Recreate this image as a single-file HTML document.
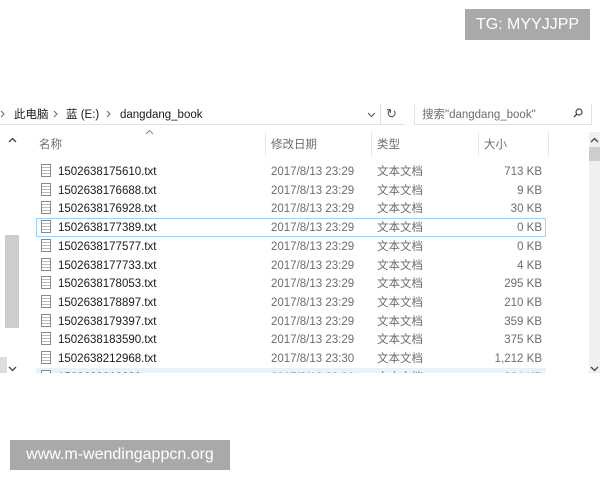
<!DOCTYPE html><html><head><meta charset="utf-8"><style>
*{margin:0;padding:0;box-sizing:border-box}
html,body{width:600px;height:480px;overflow:hidden}
body{background:#fff;position:relative;font-family:"Liberation Sans","Noto Sans CJK SC",sans-serif;font-size:11.5px;line-height:14px;color:#1a1a1a}
.a{position:absolute;white-space:nowrap;line-height:14px}
.g{color:#6d6d6d}
.row{position:absolute;left:36px;width:510px;height:19px}
.row span{position:absolute;top:3px;line-height:14px;height:14px;overflow:visible}
.ic{position:absolute;left:5px;top:2px;width:10px;height:13px;border:1px solid #8a8a8a;background:repeating-linear-gradient(#fff 0 2px,#bbb 2px 3px)}
.wm{position:absolute;background:#a9a9a9;color:#fff;font-size:16px;font-family:"Liberation Sans",sans-serif}
svg{position:absolute}
</style></head><body>
<svg style="left:0;top:110px" width="5" height="8"><path d="M1 1l3 3-3 3" fill="none" stroke="#666"/></svg>
<div class="a" style="left:14px;top:108px">此电脑</div>
<svg style="left:53px;top:110px" width="5" height="8"><path d="M1 1l3 3-3 3" fill="none" stroke="#666"/></svg>
<div class="a" style="left:66px;top:108px">蓝 (E:)</div>
<svg style="left:106px;top:110px" width="5" height="8"><path d="M1 1l3 3-3 3" fill="none" stroke="#666"/></svg>
<div class="a" style="left:120px;top:108px">dangdang_book</div>
<svg style="left:367px;top:112px" width="9" height="6"><path d="M1 1l3.5 3.5L8 1" fill="none" stroke="#555"/></svg>
<div class="a" style="left:386px;top:107px;color:#555;font-size:13px">↻</div>
<div class="a" style="left:380px;top:104px;width:1px;height:20px;background:#ddd"></div>
<div class="a" style="left:0;top:124px;width:405px;height:1px;background:#e3e3e3"></div>
<div class="a" style="left:414px;top:104px;width:178px;height:21px;border:1px solid #e3e3e3;border-top:none"></div>
<div class="a g" style="left:422px;top:108px">搜索"dangdang_book"</div>
<svg style="left:573px;top:108px" width="10" height="10"><circle cx="6" cy="4" r="3" fill="none" stroke="#444" stroke-width="1.2"/><path d="M4 6L1 9" stroke="#444" stroke-width="1.4"/></svg>
<svg style="left:145px;top:129px" width="9" height="6"><path d="M1 5l3.5-3.5L8 5" fill="none" stroke="#888"/></svg>
<div class="a g" style="left:39px;top:138px">名称</div>
<div class="a g" style="left:271px;top:138px">修改日期</div>
<div class="a g" style="left:377px;top:138px">类型</div>
<div class="a g" style="left:484px;top:138px">大小</div>
<div class="a" style="left:265px;top:132px;width:1px;height:24px;background:#e5e5e5"></div>
<div class="a" style="left:371px;top:132px;width:1px;height:24px;background:#e5e5e5"></div>
<div class="a" style="left:478px;top:132px;width:1px;height:24px;background:#e5e5e5"></div>
<div class="a" style="left:548px;top:132px;width:1px;height:24px;background:#e5e5e5"></div>
<!-- left scroll -->
<svg style="left:8px;top:137px" width="9" height="6"><path d="M1 5l3.5-3.5L8 5" fill="none" stroke="#444" stroke-width="1.3"/></svg>
<div class="a" style="left:5px;top:235px;width:14px;height:93px;background:#cdcdcd"></div>
<div class="a" style="left:0;top:357px;width:7px;height:16px;background:#ddd"></div>
<svg style="left:8px;top:366px" width="9" height="6"><path d="M1 1l3.5 3.5L8 1" fill="none" stroke="#444" stroke-width="1.3"/></svg>
<!-- right scroll -->
<div class="a" style="left:589px;top:132px;width:11px;height:241px;background:#f0f0f0"></div>
<div class="a" style="left:589px;top:147px;width:11px;height:14px;background:#cdcdcd"></div>
<svg style="left:590px;top:137px" width="9" height="6"><path d="M1 5l3.5-3.5L8 5" fill="none" stroke="#444" stroke-width="1.3"/></svg>
<svg style="left:590px;top:366px" width="9" height="6"><path d="M1 1l3.5 3.5L8 1" fill="none" stroke="#444" stroke-width="1.3"/></svg>
<div style="position:absolute;left:0;top:161px;width:588px;height:212px;overflow:hidden">
<div style="position:absolute;left:0;top:-160px;width:588px;height:240px">
<div class="row" style="top:161px"><i class="ic"></i><span style="left:22px">1502638175610.txt</span><span class="g" style="left:235px">2017/8/13 23:29</span><span class="g" style="left:341px">文本文档</span><span class="g" style="right:4px">713 KB</span></div>
<div class="row" style="top:179.7px"><i class="ic"></i><span style="left:22px">1502638176688.txt</span><span class="g" style="left:235px">2017/8/13 23:29</span><span class="g" style="left:341px">文本文档</span><span class="g" style="right:4px">9 KB</span></div>
<div class="row" style="top:198.4px"><i class="ic"></i><span style="left:22px">1502638176928.txt</span><span class="g" style="left:235px">2017/8/13 23:29</span><span class="g" style="left:341px">文本文档</span><span class="g" style="right:4px">30 KB</span></div>
<div class="row" style="top:217.1px;border:1px solid #99d1ff"><i class="ic" style="left:4px;top:1px"></i><span style="left:21px;top:2px">1502638177389.txt</span><span class="g" style="left:234px;top:2px">2017/8/13 23:29</span><span class="g" style="left:340px;top:2px">文本文档</span><span class="g" style="right:3px;top:2px">0 KB</span></div>
<div class="row" style="top:235.8px"><i class="ic"></i><span style="left:22px">1502638177577.txt</span><span class="g" style="left:235px">2017/8/13 23:29</span><span class="g" style="left:341px">文本文档</span><span class="g" style="right:4px">0 KB</span></div>
<div class="row" style="top:254.5px"><i class="ic"></i><span style="left:22px">1502638177733.txt</span><span class="g" style="left:235px">2017/8/13 23:29</span><span class="g" style="left:341px">文本文档</span><span class="g" style="right:4px">4 KB</span></div>
<div class="row" style="top:273.2px"><i class="ic"></i><span style="left:22px">1502638178053.txt</span><span class="g" style="left:235px">2017/8/13 23:29</span><span class="g" style="left:341px">文本文档</span><span class="g" style="right:4px">295 KB</span></div>
<div class="row" style="top:291.9px"><i class="ic"></i><span style="left:22px">1502638178897.txt</span><span class="g" style="left:235px">2017/8/13 23:29</span><span class="g" style="left:341px">文本文档</span><span class="g" style="right:4px">210 KB</span></div>
<div class="row" style="top:310.6px"><i class="ic"></i><span style="left:22px">1502638179397.txt</span><span class="g" style="left:235px">2017/8/13 23:29</span><span class="g" style="left:341px">文本文档</span><span class="g" style="right:4px">359 KB</span></div>
<div class="row" style="top:329.3px"><i class="ic"></i><span style="left:22px">1502638183590.txt</span><span class="g" style="left:235px">2017/8/13 23:29</span><span class="g" style="left:341px">文本文档</span><span class="g" style="right:4px">375 KB</span></div>
<div class="row" style="top:348px"><i class="ic"></i><span style="left:22px">1502638212968.txt</span><span class="g" style="left:235px">2017/8/13 23:30</span><span class="g" style="left:341px">文本文档</span><span class="g" style="right:4px">1,212 KB</span></div>
<div class="row" style="top:366.7px;background:#e5f3fb"><i class="ic"></i><span style="left:22px">1502638216839.txt</span><span class="g" style="left:235px">2017/8/13 23:30</span><span class="g" style="left:341px">文本文档</span><span class="g" style="right:4px">224 KB</span></div>
</div></div>
<div class="wm" style="left:465px;top:9px;width:125px;height:31px;line-height:31px;text-align:center">TG: MYYJJPP</div>
<div class="wm" style="left:10px;top:440px;width:220px;height:30px;line-height:30px;text-align:center">www.m-wendingappcn.org</div>
</body></html>
